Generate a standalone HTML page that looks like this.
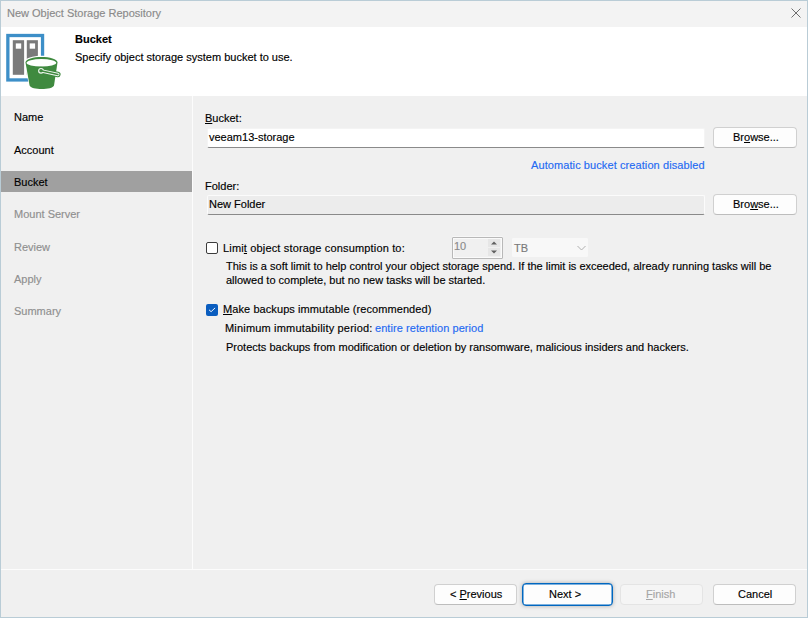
<!DOCTYPE html>
<html><head><meta charset="utf-8">
<style>
*{box-sizing:border-box;margin:0;padding:0}
html,body{width:808px;height:618px;overflow:hidden;background:#f0f0f0}
body{position:relative;font-family:"Liberation Sans",sans-serif;font-size:11px;color:#000}
.t{-webkit-text-stroke:0.15px currentColor}
.a{position:absolute}
.t{position:absolute;white-space:nowrap;line-height:13px;height:13px}
#win{position:absolute;left:0;top:0;width:808px;height:618px;border:1px solid #b9ccd6;background:#f0f0f0}
#title{left:1px;top:1px;width:806px;height:26px;background:#f3f3f3}
#header{left:1px;top:27px;width:806px;height:69px;background:#fff}
#nav{left:1px;top:96px;width:191px;height:473px;background:#f0f0f0}
#vsep{left:192px;top:96px;width:1px;height:473px;background:#fcfcfc}
#hsep{left:1px;top:569px;width:806px;height:1px;background:#fcfcfc}
.sel{left:1px;top:171px;width:191px;height:21px;background:#a0a0a0}
.dis{color:#8f8f8f}
.link{color:#1f6af2}
.u{text-decoration:underline;text-underline-offset:1px}
.btn{position:absolute;background:#fdfdfd;border:1px solid #d0d0d0;border-bottom-color:#bdbdbd;border-radius:4px}
.input{position:absolute;background:#fff;border:1px solid #f4f4f4;border-bottom:1px solid #8a8a8a;border-radius:2px}
.cb{position:absolute;width:12px;height:12px;border-radius:2px}
</style></head><body>
<div id="win"></div>
<div class="a" id="title"></div>
<div class="t" style="left:7px;top:7px;color:#8a8a8a">New Object Storage Repository</div>
<svg class="a" style="left:789px;top:7px" width="14" height="12" viewBox="0 0 14 12"><path d="M2.5 1.5 L11.5 10.5 M11.5 1.5 L2.5 10.5" stroke="#6e6e6e" stroke-width="1" fill="none"/></svg>

<div class="a" id="header"></div>
<div class="t" style="left:75px;top:33px;font-weight:bold">Bucket</div>
<div class="t" style="left:75px;top:51px">Specify object storage system bucket to use.</div>

<div class="a" id="nav"></div>
<div class="a sel"></div>
<div class="a" id="vsep"></div>
<div class="a" id="hsep"></div>
<div class="t" style="left:14px;top:111px">Name</div>
<div class="t" style="left:14px;top:144px">Account</div>
<div class="t" style="left:14px;top:176px">Bucket</div>
<div class="t dis" style="left:14px;top:208px">Mount Server</div>
<div class="t dis" style="left:14px;top:241px">Review</div>
<div class="t dis" style="left:14px;top:273px">Apply</div>
<div class="t dis" style="left:14px;top:305px">Summary</div>

<!-- content -->
<div class="t" style="left:205px;top:112px"><span class="u">B</span>ucket:</div>
<div class="input" style="left:207px;top:128px;width:498px;height:20px"></div>
<div class="t" style="left:209px;top:131px">veeam13-storage</div>
<div class="btn" style="left:713px;top:127px;width:84px;height:21px"></div>
<div class="t" style="left:733px;top:131px">Br<span class="u">o</span>wse...</div>
<div class="t link" style="left:531px;top:159px;letter-spacing:0.09px">Automatic bucket creation disabled</div>

<div class="t" style="left:205px;top:180px">Folder:</div>
<div class="input" style="left:207px;top:195px;width:498px;height:20px;background:#ececec;border-color:#fbfbfb;border-bottom-color:#8a8a8a"></div>
<div class="t" style="left:209px;top:198px">New Folder</div>
<div class="btn" style="left:713px;top:194px;width:84px;height:21px"></div>
<div class="t" style="left:733px;top:198px">Bro<span class="u">w</span>se...</div>

<!-- limit -->
<div class="cb" style="left:206px;top:242px;background:#fff;border:1px solid #3c3c3c"></div>
<div class="t" style="left:223px;top:242px;letter-spacing:0.16px">Limi<span class="u">t</span> object storage consumption to:</div>
<div class="a" style="left:452px;top:237px;width:51px;height:22px;border:1px solid #b8b8b8;box-shadow:inset 0 0 0 1px #fafafa,0 -1px 0 #f7f7f7;border-radius:1px;background:#f0f0f0"></div>
<div class="a" style="left:488px;top:239px;width:12px;height:8px;background:#e6e6e6"></div>
<div class="a" style="left:488px;top:248px;width:12px;height:8px;background:#e6e6e6"></div>
<svg class="a" style="left:488px;top:239px" width="12" height="17" viewBox="0 0 12 17"><path d="M3 5.5 L6 2.5 L9 5.5 Z M3 11.5 L6 14.5 L9 11.5 Z" fill="#606060"/></svg>
<div class="t" style="left:454px;top:240px;color:#8a8a8a">10</div>
<div class="a" style="left:511px;top:237px;width:78px;height:21px;background:#f8f8f8;border:1px solid #f0f0f0;border-radius:2px"></div>
<div class="t" style="left:514px;top:242px;color:#7a7a7a">TB</div>
<svg class="a" style="left:576px;top:244px" width="11" height="8" viewBox="0 0 11 8"><path d="M1.5 2 L5.5 6 L9.5 2" stroke="#b0b0b0" stroke-width="1" fill="none"/></svg>
<div class="t" style="left:226px;top:260px">This is a soft limit to help control your object storage spend. If the limit is exceeded, already running tasks will be</div>
<div class="t" style="left:226px;top:274px">allowed to complete, but no new tasks will be started.</div>

<!-- immutable -->
<div class="cb" style="left:206px;top:304px;background:#0a5dbf"></div>
<svg class="a" style="left:206px;top:304px" width="12" height="12" viewBox="0 0 12 12"><path d="M3 5.8 L5.1 7.7 L9.1 3.9" stroke="#eef4fb" stroke-width="1" fill="none"/></svg>
<div class="t" style="left:223px;top:303px;letter-spacing:0.085px"><span class="u">M</span>ake backups immutable (recommended)</div>
<div class="t" style="left:225px;top:322px;letter-spacing:0.18px">Minimum immutability period:</div>
<div class="t link" style="left:375px;top:322px;letter-spacing:0.06px">entire retention period</div>
<div class="t" style="left:226px;top:341px">Protects backups from modification or deletion by ransomware, malicious insiders and hackers.</div>

<!-- footer -->
<div class="btn" style="left:434px;top:584px;width:83px;height:21px"></div>
<div class="t" style="left:450px;top:588px">&lt; <span class="u">P</span>revious</div>
<div class="a" style="left:522px;top:583px;width:91px;height:23px;border:1px solid #0067c0;border-radius:4px;background:#fdfdfd;box-shadow:inset 0 0 0 0.5px #0067c0,0 0 4px rgba(0,0,0,0.28)"></div>
<div class="t" style="left:549px;top:588px">Next &gt;</div>
<div class="btn" style="left:620px;top:584px;width:83px;height:21px;background:#f5f5f5;border-color:#e4e4e4"></div>
<div class="t" style="left:646px;top:588px;color:#a5a5a5"><span class="u">F</span>inish</div>
<div class="btn" style="left:713px;top:584px;width:83px;height:21px"></div>
<div class="t" style="left:738px;top:588px">Cancel</div>

<!-- icon -->
<svg class="a" style="left:0px;top:25px" width="64" height="70" viewBox="0 25 64 70">
  <rect x="7.85" y="35.5" width="34.7" height="44.45" fill="none" stroke="#3d8fc8" stroke-width="3.3"/>
  <rect x="12.8" y="40.2" width="11.3" height="34.6" fill="#7a7a7a"/>
  <rect x="26.8" y="40.2" width="11.1" height="34.6" fill="#7a7a7a"/>
  <rect x="15.8" y="43.4" width="5.4" height="5.3" fill="#fff"/>
  <rect x="29.7" y="43.4" width="5.4" height="5.3" fill="#fff"/>
  <path d="M24.6 62.5 C24.6 53.6 58.4 53.6 58.4 62.5 L54.6 85.5 C53.5 91.2 30 91.2 29 85.5 Z" fill="#fff"/>
  <path d="M25.5 62.5 C25.5 55 57.5 55 57.5 62.5 L54 85.5 C52.5 90.3 31 90.3 29.6 85.5 Z" fill="#3f8a3f"/>
  <ellipse cx="41.4" cy="62.8" rx="14.9" ry="3.75" fill="#fff"/>
  <g stroke-linecap="round">
    <line x1="41" y1="70.8" x2="57.8" y2="74.5" stroke="#3f8a3f" stroke-width="5.6"/>
    <circle cx="41" cy="70.8" r="4" fill="#3f8a3f"/>
    <line x1="41" y1="70.8" x2="57.8" y2="74.5" stroke="#f2f7f2" stroke-width="3.4"/>
    <circle cx="41" cy="70.8" r="2.9" fill="#f2f7f2"/>
    <line x1="41" y1="70.8" x2="57.8" y2="74.5" stroke="#3f8a3f" stroke-width="1.6"/>
    <circle cx="41" cy="70.8" r="1.8" fill="#3f8a3f"/>
  </g>
</svg>
</body></html>
